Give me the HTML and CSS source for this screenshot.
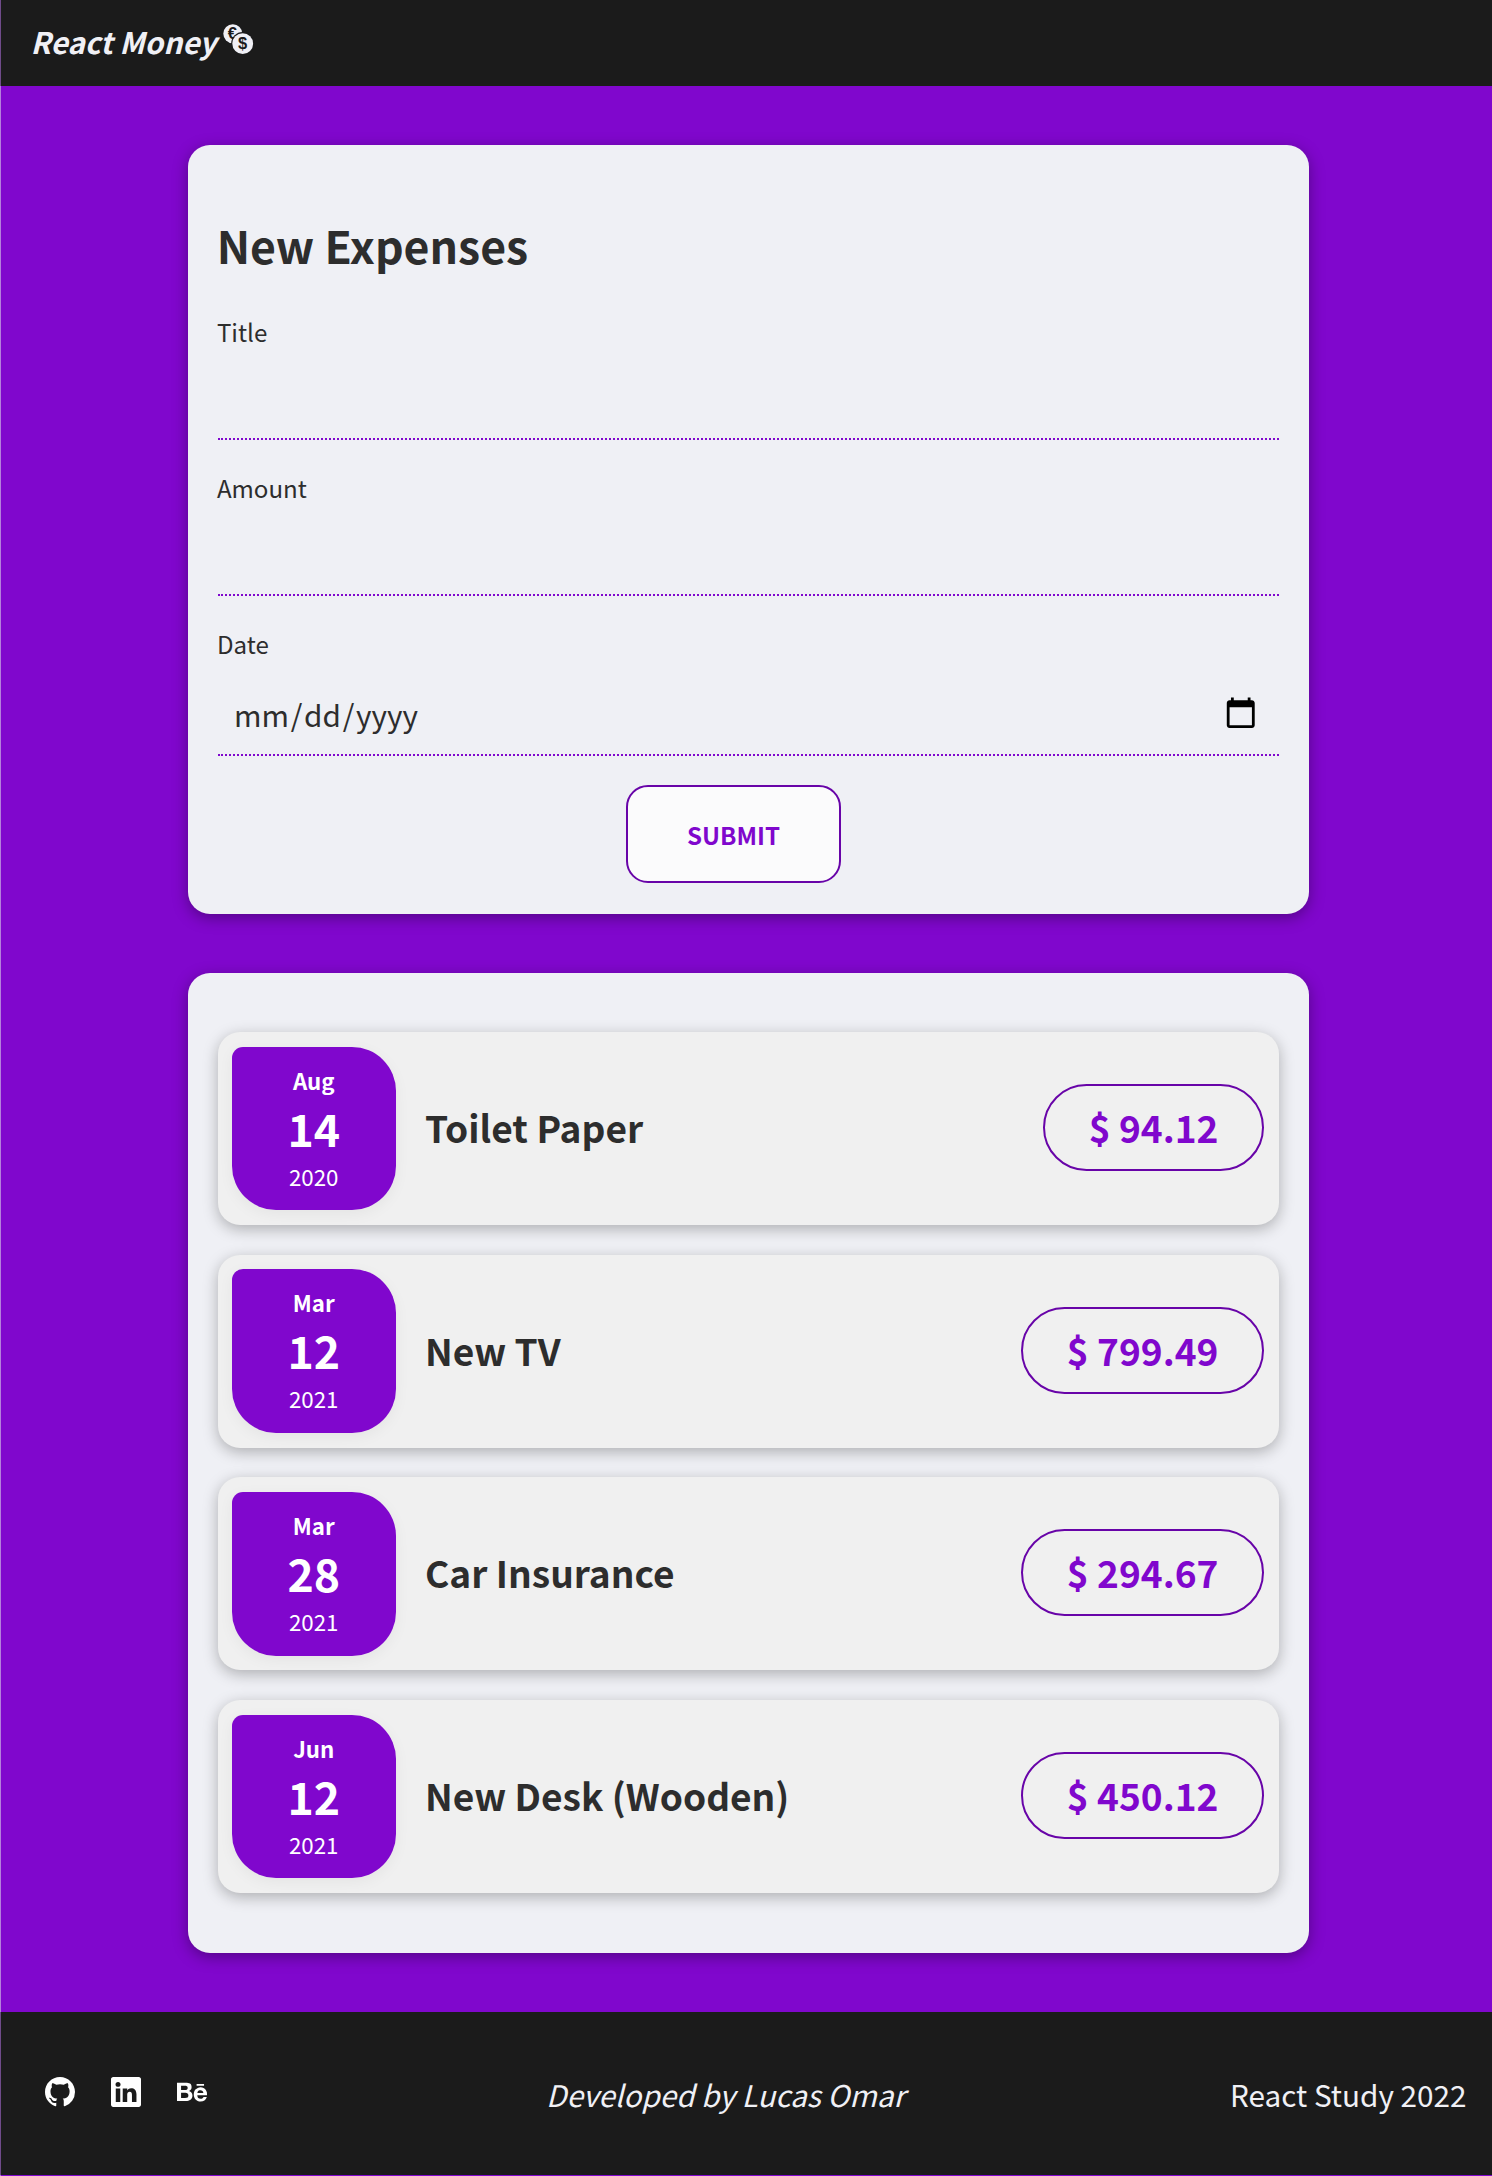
FILE: index.html
```html
<!DOCTYPE html>
<html lang="en">
<head>
<meta charset="utf-8">
<title>React Money</title>
<link rel="stylesheet" href="styles.css">
</head>
<body>
<header class="header">
  <span class="logo">React Money</span>
  <svg class="coins" viewBox="0 0 31 31">
    <circle cx="9.8" cy="9.8" r="9.5" fill="#f0f0f5"/>
    <text x="9.3" y="15.2" class="coin-sign">€</text>
    <circle cx="19.7" cy="19.7" r="11.6" fill="#1b1b1b"/>
    <circle cx="19.7" cy="19.7" r="10.400" fill="#f0f0f5"/>
    <text x="19.7" y="25.400" class="coin-sign">$</text>
  </svg>
</header>
<main class="main">
  <form class="card form">
    <h2 class="heading">New Expenses</h2>
    <div class="field"><label>Title</label><div class="input"></div></div>
    <div class="field"><label>Amount</label><div class="input"></div></div>
    <div class="field field-date"><label>Date</label>
      <div class="input">
        <div class="date-text"><span>mm</span><span>/</span><span>dd</span><span>/</span><span>yyyy</span></div>
        <svg class="calendar" viewBox="0 0 24 24"><path d="M20 3h-1V1h-2v2H7V1H5v2H4c-1.1 0-2 .9-2 2v16c0 1.1.9 2 2 2h16c1.100 0 2-.9 2-2V5c0-1.100-.9-2-2-2zm0 18H4V8h16v13z"/></svg>
      </div>
    </div>
    <button class="submit" type="button">SUBMIT</button>
  </form>
  <section class="card list">
    <article class="item">
      <div class="date"><span class="month">Aug</span><span class="day">14</span><span class="year">2020</span></div>
      <h3 class="title">Toilet Paper</h3><div class="price">$ 94.12</div>
    </article>
    <article class="item">
      <div class="date"><span class="month">Mar</span><span class="day">12</span><span class="year">2021</span></div>
      <h3 class="title">New TV</h3><div class="price">$ 799.49</div>
    </article>
    <article class="item">
      <div class="date"><span class="month">Mar</span><span class="day">28</span><span class="year">2021</span></div>
      <h3 class="title">Car Insurance</h3><div class="price">$ 294.67</div>
    </article>
    <article class="item">
      <div class="date"><span class="month">Jun</span><span class="day">12</span><span class="year">2021</span></div>
      <h3 class="title">New Desk (Wooden)</h3><div class="price">$ 450.12</div>
    </article>
  </section>
</main>
<footer class="footer">
  <nav class="social">
    <svg viewBox="0 0 16 16"><path d="M8 0C3.580 0 0 3.580 0 8c0 3.540 2.290 6.530 5.470 7.590.4.070.55-.17.55-.38 0-.19-.01-.82-.01-1.490-2.010.37-2.530-.49-2.690-.94-.09-.23-.48-.94-.82-1.130-.28-.15-.68-.52-.01-.53.63-.01 1.080.58 1.230.82.72 1.210 1.870.87 2.330.66.070-.52.28-.87.51-1.070-1.780-.2-3.640-.89-3.640-3.950 0-.87.31-1.590.82-2.150-.08-.2-.36-1.020.08-2.120 0 0 .67-.21 2.200.82.64-.18 1.320-.27 2-.27s1.360.09 2 .27c1.530-1.040 2.200-.82 2.200-.82.44 1.100.16 1.920.08 2.120.51.56.82 1.270.82 2.150 0 3.070-1.870 3.750-3.650 3.950.29.25.54.73.54 1.480 0 1.070-.01 1.930-.01 2.200 0 .21.15.46.55.38A8.010 8.010 0 0 0 16 8c0-4.420-3.580-8-8-8"/></svg>
    <svg viewBox="0 0 16 16"><path d="M0 1.146C0 .513.526 0 1.175 0h13.650C15.474 0 16 .513 16 1.146v13.708c0 .633-.526 1.146-1.175 1.146H1.175C.526 16 0 15.487 0 14.854zm4.943 12.248V6.169H2.542v7.225zm-1.200-8.212c.837 0 1.358-.554 1.358-1.248-.015-.709-.52-1.248-1.342-1.248S2.400 3.226 2.400 3.934c0 .694.521 1.248 1.327 1.248zm4.908 8.212V9.359c0-.216.016-.432.080-.586.173-.431.568-.878 1.232-.878.869 0 1.216.662 1.216 1.634v3.865h2.401V9.250c0-2.220-1.184-3.252-2.764-3.252-1.274 0-1.845.7-2.165 1.193v.025h-.016l.016-.025V6.169h-2.400c.030.678 0 7.225 0 7.225z"/></svg>
    <svg viewBox="0 0 16 16"><path d="M4.654 3c.461 0 .887.035 1.278.14.39.07.711.216.996.391s.497.426.641.747c.14.32.216.711.216 1.137 0 .496-.106.922-.356 1.242-.215.32-.566.606-.997.817.606.176 1.067.496 1.348.922s.461.957.461 1.563c0 .496-.105.922-.285 1.278a2.300 2.300 0 0 1-.782.887c-.32.215-.711.39-1.137.496a5.300 5.300 0 0 1-1.278.176L0 12.803V3zm-.285 3.978c.39 0 .71-.105.957-.285.246-.18.355-.497.355-.887 0-.216-.035-.426-.105-.567a1 1 0 0 0-.32-.355 1.800 1.800 0 0 0-.461-.176c-.176-.035-.356-.035-.567-.035H2.170v2.310c0-.005 2.200-.005 2.200-.005zm.105 4.193c.215 0 .426-.035.606-.07.176-.035.356-.106.496-.216s.25-.215.356-.39c.07-.176.14-.391.14-.641 0-.496-.14-.852-.426-1.102-.285-.215-.676-.32-1.137-.32H2.170v2.734h2.305zm6.858-.035q.428.427 1.278.426c.39 0 .746-.106 1.032-.286q.426-.32.53-.64h1.740c-.286.851-.712 1.457-1.278 1.848-.566.355-1.243.566-2.060.566a4.100 4.100 0 0 1-1.527-.285 2.800 2.800 0 0 1-1.137-.782 2.850 2.850 0 0 1-.712-1.172c-.175-.461-.25-.957-.25-1.528 0-.531.07-1.032.25-1.493.18-.46.426-.852.747-1.207.32-.32.711-.606 1.137-.782a4 4 0 0 1 1.493-.285c.606 0 1.137.105 1.598.355.46.25.817.532 1.102.958.285.39.496.851.641 1.348.07.496.105.996.07 1.563h-5.150c0 .58.21 1.110.496 1.396m2.240-3.732c-.25-.25-.642-.391-1.103-.391-.32 0-.566.07-.781.176s-.356.25-.496.39a.96.96 0 0 0-.25.497c-.036.175-.07.32-.07.46h3.196c-.07-.526-.25-.882-.497-1.132zm-3.127-3.728h3.978v.957h-3.978z"/></svg>
  </nav>
  <p class="credit">Developed by Lucas Omar</p>
  <p class="study">React Study 2022</p>
</footer>
</body>
</html>
```
FILE: styles.css
```css
* { box-sizing: border-box; margin: 0; padding: 0; }

body {
  width: 1492px;
  height: 2176px;
  background: #8007cd;
  color: #2d2d2d;
  font-family: "Noto Sans CJK JP", sans-serif;
  font-size: 29.7px;
  display: flex;
  flex-direction: column;
  overflow: hidden;
  box-shadow: inset 1px 0 #b480dc;
}

.header {
  height: 85.5px;
  background: #1b1b1b;
  border-left: 1px solid #6f4b8a;
  color: #f0f0f5;
  display: flex;
  align-items: flex-start;
  padding: 19.5px 0 0 29.5px;
}
.logo { font-size: 29.7px; line-height: 43px; font-weight: 700; font-style: italic; }
.coins { width: 31px; height: 31px; margin: 4.5px 0 0 6.5px; }
.coin-sign { font: 700 16.5px "Liberation Sans", sans-serif; fill: #1b1b1b; text-anchor: middle; }

.main { padding: 59.5px 183.5px 59.5px 188px; display: flex; flex-direction: column; gap: 59px; }
.card {
  background: #eff0f5;
  border-radius: 22px;
  padding: 0 29.5px;
  box-shadow: 0 4px 15px rgba(0, 0, 0, .35);
}
.form { height: 768.5px; padding-top: 67.5px; display: flex; flex-direction: column; }
.heading { font-size: 44.6px; line-height: 64px; font-weight: 700; margin: 0 0 36px -0.8px; }
.field { height: 127.5px; margin-bottom: 28.5px; display: flex; flex-direction: column; }
.field label { font-size: 24.1px; line-height: 37px; margin-left: -0.6px; }
.input { flex: 1; border-bottom: 2px dotted #8007cd; display: flex; justify-content: space-between; }
.field-date { height: 131.5px; margin-bottom: 29px; }
.date-text { display: flex; padding: 31.5px 0 0 15.5px; line-height: 43px; font-size: 29.7px; }
.date-text span { padding: 0 .9px; }
.calendar { width: 33.5px; height: 33.5px; margin: 34.5px 22px 0 0; fill: #000; }
.submit {
  width: 215px;
  height: 98px;
  margin-left: 408.5px;
  border: 2px solid #6804a8;
  border-radius: 22px;
  background: #fbfbfc;
  color: #8007cd;
  font: 700 24.1px "Noto Sans CJK JP", sans-serif;
}

.list { padding-top: 59.5px; height: 980px; display: flex; flex-direction: column; gap: 29.7px; }
.item {
  height: 193px;
  background: #f0f0f0;
  border-radius: 22px;
  padding: 0 15px;
  display: flex;
  align-items: center;
  box-shadow: 0 4px 15px rgba(0, 0, 0, .28);
}
.date {
  width: 163.5px;
  height: 163.5px;
  background: #8007cd;
  border-radius: 11px 44px 44px 44px;
  color: #fff;
  display: flex;
  flex-direction: column;
  align-items: center;
  padding-top: 16px;
  margin-left: -0.5px;
  box-shadow: 0 4px 15px rgba(0, 0, 0, .05);
}
.month { font-size: 22.3px; line-height: 34px; font-weight: 700; }
.day { font-size: 44.600px; line-height: 62px; font-weight: 700; }
.year { font-size: 22.300px; line-height: 34px; }
.title { flex: 1; margin: -3px 0 0 29.5px; font-size: 37.1px; line-height: 54px; font-weight: 700; }
.price {
  height: 87px;
  margin-top: -2px;
  padding: 0 43.5px 0 44px;
  border: 2px solid #6804a8;
  border-radius: 44px;
  color: #8007cd;
  font-size: 37.1px;
  line-height: 82px;
  font-weight: 700;
}

.footer {
  height: 163px;
  background: #1b1b1b;
  border-left: 1px solid #6f4b8a;
  color: #f0f0f5;
  display: flex;
  justify-content: space-between;
  padding: 0 25.5px 0 44px;
  line-height: 43px;
}
.social { display: flex; gap: 36px; padding-top: 65px; }
.social svg { width: 30px; height: 30px; fill: #fff; }
.credit { font-style: italic; margin: 60.5px 0 0 14px; }
.study { margin-top: 60.5px; }
```
